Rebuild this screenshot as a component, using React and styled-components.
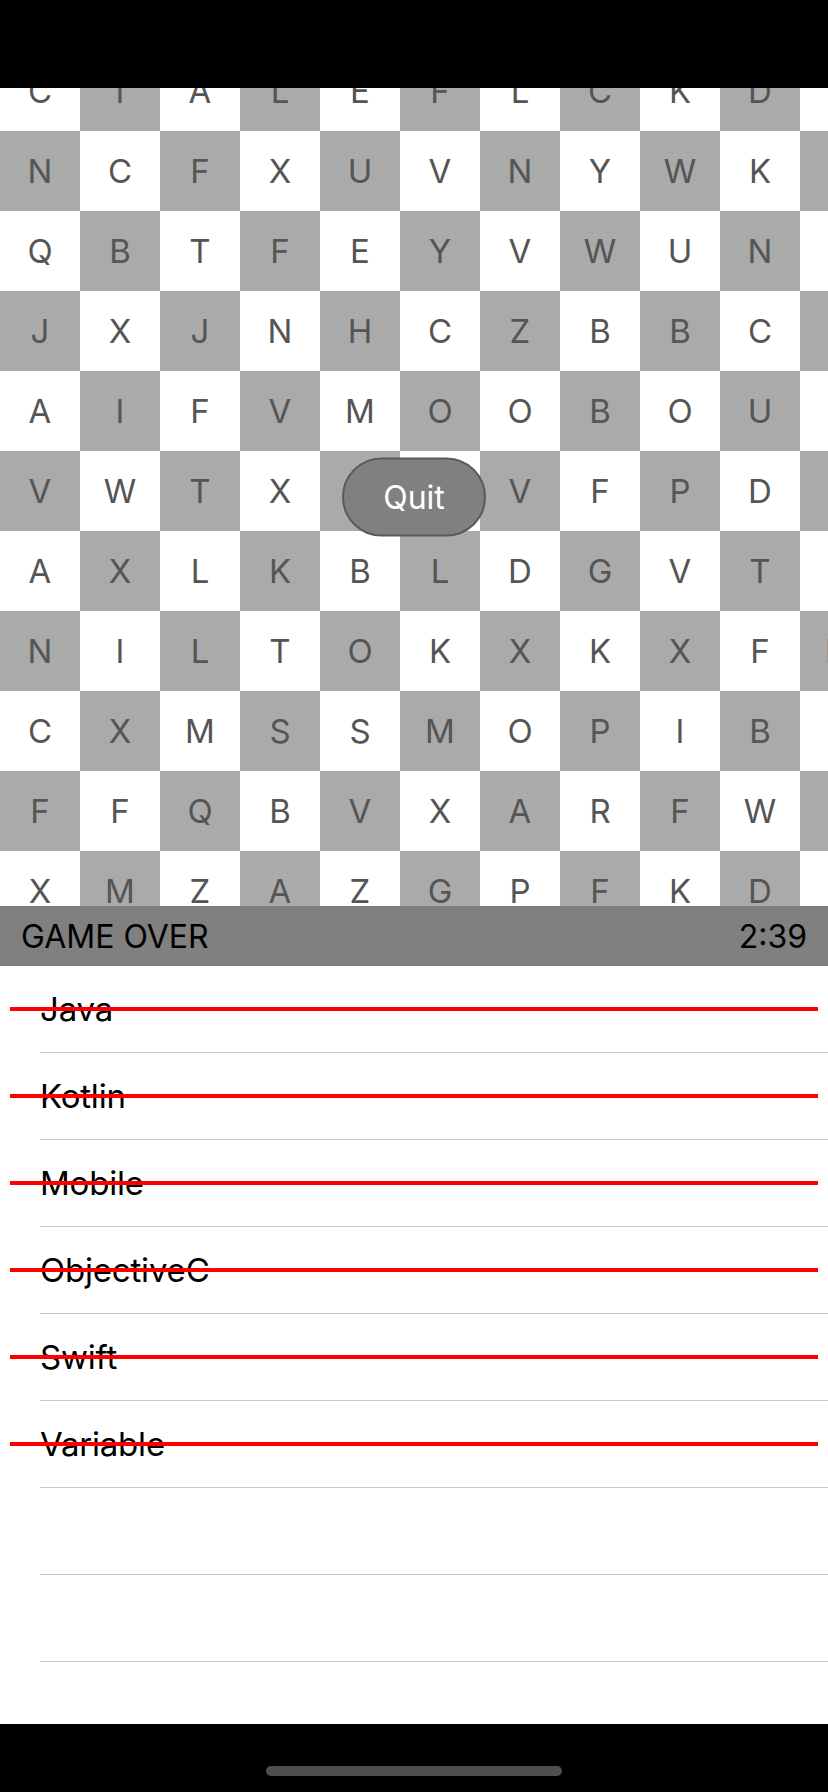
import React from "react";
import styled, { createGlobalStyle } from "styled-components";

const GlobalStyle = createGlobalStyle`
  html, body {
    margin: 0;
    padding: 0;
    background: #000;
  }
  body {
    font-family: Inter, "Noto Sans", "Liberation Sans", sans-serif;
  }
  * { box-sizing: border-box; }
`;

const Screen = styled.div`
  width: 828px;
  height: 1792px;
  display: flex;
  flex-direction: column;
  overflow: hidden;
  background: #fff;
`;

const StatusBar = styled.div`
  flex: 0 0 88px;
  background: #000;
`;

const Board = styled.div`
  flex: 0 0 818px;
  position: relative;
  overflow: hidden;
  background: #fff;
`;

const Grid = styled.div`
  display: grid;
  grid-template-columns: repeat(11, 80px);
  grid-auto-rows: 80px;
  width: 880px;
  margin-top: -37px;
`;

const Cell = styled.div`
  display: flex;
  align-items: center;
  justify-content: center;
  background: ${(p) => (p.$dark ? "#aaaaaa" : "#ffffff")};
  color: #555555;
  font-size: 33px;
  font-weight: 400;
`;

const QuitButton = styled.button`
  position: absolute;
  left: 50%;
  top: 50%;
  transform: translate(-50%, -50%);
  width: 144px;
  height: 79px;
  border-radius: 40px;
  border: 2px solid #5a5a5a;
  background: #808080;
  color: #ffffff;
  font-family: inherit;
  font-size: 32px;
  padding: 0;
  display: flex;
  align-items: center;
  justify-content: center;
`;

const Header = styled.div`
  flex: 0 0 60px;
  background: #808080;
  display: flex;
  align-items: center;
  justify-content: space-between;
  padding: 0 21px 0 21px;
  color: #000;
  font-size: 32px;
`;

const WordList = styled.div`
  flex: 1 1 auto;
  overflow: hidden;
  background: #fff;
`;

const WordRow = styled.div`
  position: relative;
  height: 87px;
  display: flex;
  align-items: center;
  padding-left: 40px;
  padding-bottom: 1px;
  font-size: 33px;
  letter-spacing: -0.2px;
  color: #000;

  &::after {
    content: "";
    position: absolute;
    left: 40px;
    right: 0;
    bottom: 0;
    height: 1px;
    background: #c8c8c8;
  }
`;

const Strike = styled.div`
  position: absolute;
  left: 10px;
  right: 10px;
  top: 41px;
  height: 4px;
  background: #ff0000;
`;

const HomeBar = styled.div`
  flex: 0 0 68px;
  background: #000;
  display: flex;
  justify-content: center;
  align-items: flex-end;
  padding-bottom: 16px;
`;

const HomeIndicator = styled.div`
  width: 296px;
  height: 10px;
  border-radius: 5px;
  background: #4f4f4f;
`;

const rows = [
  "CIALEFLCKDQ",
  "NCFXUVNYWKA",
  "QBTFEYVWUNS",
  "JXJNHCZBBCE",
  "AIFVMOOBOUR",
  "VWTX  VFPDT",
  "AXLKBLDGVTO",
  "NILTOKXKXFM",
  "CXMSSMOPIBH",
  "FFQBVXARFWL",
  "XMZAZGPFKDY",
];

const words = ["Java", "Kotlin", "Mobile", "ObjectiveC", "Swift", "Variable", "", "", ""];

export default function App() {
  return (
    <>
      <GlobalStyle />
      <Screen>
        <StatusBar />
        <Board>
          <Grid>
            {rows.map((row, r) =>
              row.split("").map((ch, c) => (
                <Cell key={`${r}-${c}`} $dark={(r + c) % 2 === 1}>
                  {ch.trim()}
                </Cell>
              ))
            )}
          </Grid>
          <QuitButton>Quit</QuitButton>
        </Board>
        <Header>
          <span>GAME OVER</span>
          <span>2:39</span>
        </Header>
        <WordList>
          {words.map((w, i) => (
            <WordRow key={i}>
              {w}
              {w && <Strike />}
            </WordRow>
          ))}
        </WordList>
        <HomeBar>
          <HomeIndicator />
        </HomeBar>
      </Screen>
    </>
  );
}
